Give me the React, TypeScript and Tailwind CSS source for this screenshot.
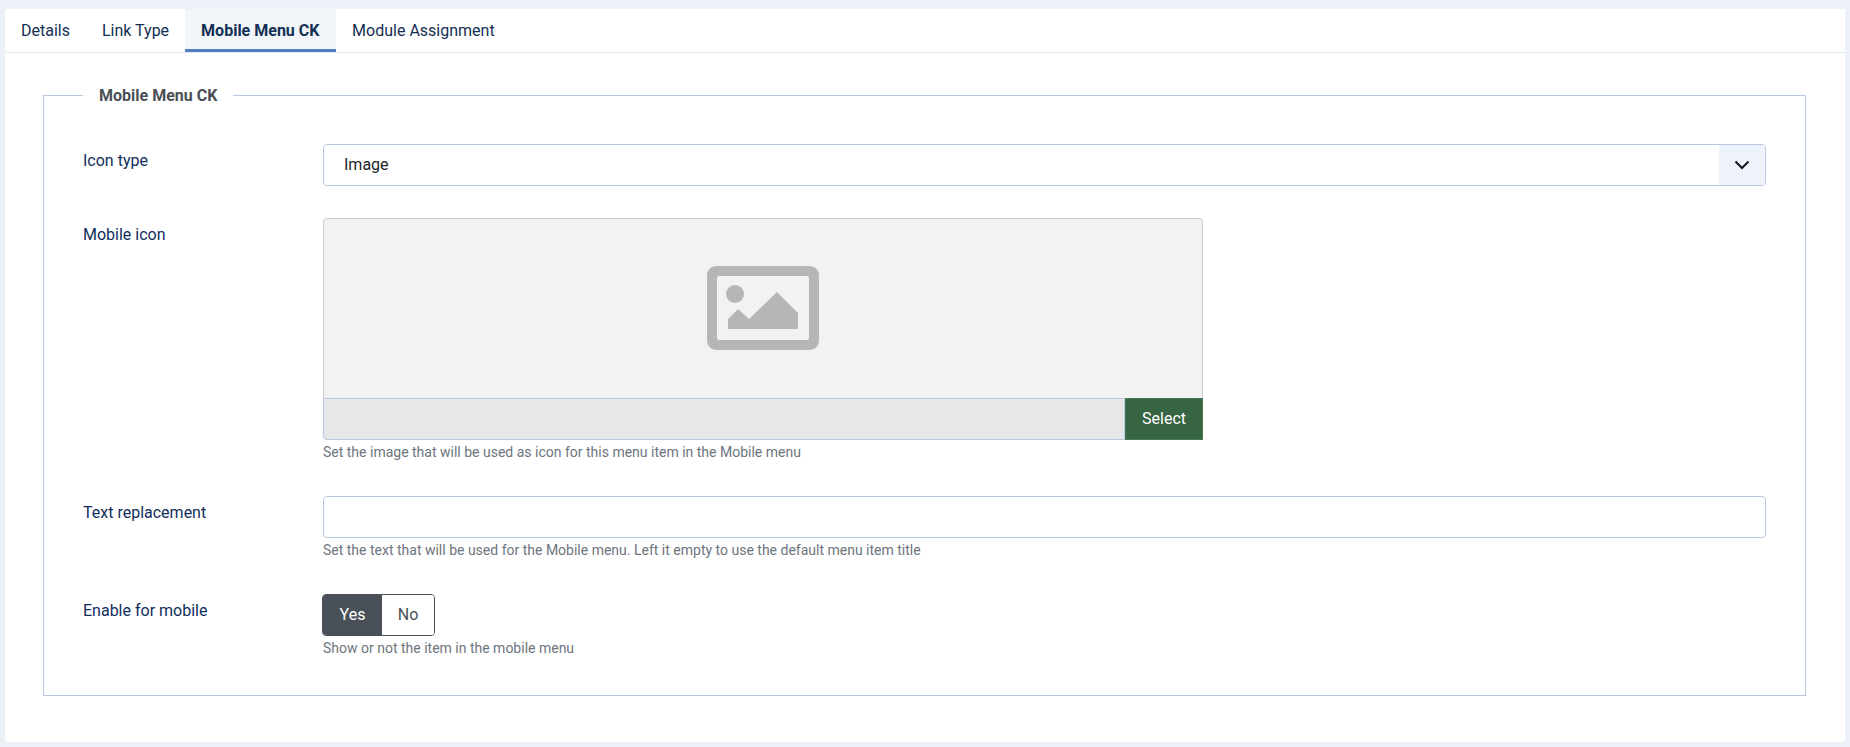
import React from "react";

function Tab({ label, active }: { label: string; active?: boolean }) {
  return active ? (
    <div className="h-[43px] w-[151px] pl-4 flex items-center bg-[#f2f6fa] border-b-[3px] border-[#5280bd] font-bold text-[#132f53] pt-[3px]">{label}</div>
  ) : (
    <div className="h-[43px] px-4 flex items-center text-[#132f53]">{label}</div>
  );
}

function Label({ children }: { children: React.ReactNode }) {
  return <div className="w-[240px] shrink-0 text-[#112e5c] text-base leading-6 pt-[5px]">{children}</div>;
}

function Help({ children }: { children: React.ReactNode }) {
  return <div className="text-sm leading-[21px] text-[#6d757e] mt-[2px]">{children}</div>;
}

export default function App() {
  return (
    <div className="min-h-[747px] bg-[#ecf1f7] px-[5px] py-[9px] font-['Roboto',sans-serif]">
      <div className="bg-white h-[733px] rounded-b-[4px] overflow-hidden">
        <div className="flex h-[44px] border-b border-[#e1e7f2] text-base">
          <Tab label="Details" />
          <Tab label="Link Type" />
          <Tab label="Mobile Menu CK" active />
          <Tab label="Module Assignment" />
        </div>
        <div className="pt-[29px] pl-[38px] pr-[39px]">
          <fieldset className="border border-[#b8c8e0] pl-[39px] pr-[39px] h-[614px]">
            <legend className="px-4 pt-[2px] font-bold text-base leading-6 text-[#4a4f55]">Mobile Menu CK</legend>
            <div className="flex mt-[36px]">
              <Label>Icon type</Label>
              <div className="relative flex-1 h-[42px] border border-[#b8c8e0] rounded-[4px] flex items-center pl-[20px] text-base text-[#212529] overflow-hidden">
                Image
                <div className="absolute right-0 top-0 bottom-0 w-[46px] bg-[#eef3fb] flex items-center justify-center">
                  <svg width="16" height="16" viewBox="0 0 16 16" fill="none" stroke="#16181a" strokeWidth="2">
                    <path d="M1.5 4.5L8 11l6.5-6.5" />
                  </svg>
                </div>
              </div>
            </div>
            <div className="flex mt-[32px]">
              <Label>Mobile icon</Label>
              <div>
                <div className="w-[880px]">
                  <div className="h-[180px] bg-[#f2f2f2] border border-b-0 border-[#cfcfcf] rounded-t-[4px] flex items-center justify-center">
                    <svg width="112" height="84" viewBox="0 0 112 84" className="mt-[-1px]">
                      <path fillRule="evenodd" fill="#b6b6b6" d="M9 0h94a9 9 0 0 1 9 9v66a9 9 0 0 1-9 9H9a9 9 0 0 1-9-9V9a9 9 0 0 1 9-9zM12 10a2 2 0 0 0-2 2v60a2 2 0 0 0 2 2h88a2 2 0 0 0 2-2V12a2 2 0 0 0-2-2z" />
                      <circle cx="28" cy="28" r="9" fill="#b6b6b6" />
                      <path fill="#b6b6b6" d="M21 63V53l10-10 11 10 28-27 21 21v16z" />
                    </svg>
                  </div>
                  <div className="flex h-[42px]">
                    <div className="flex-1 bg-[#e7e7e7] border border-[#b8c8e0] rounded-bl-[4px]" />
                    <div className="w-[78px] bg-[#376543] border border-[#457a52] text-white flex items-center justify-center text-base">Select</div>
                  </div>
                </div>
                <Help>Set the image that will be used as icon for this menu item in the Mobile menu</Help>
              </div>
            </div>
            <div className="flex mt-[33px]">
              <Label>Text replacement</Label>
              <div className="flex-1">
                <div className="h-[42px] border border-[#b8c8e0] rounded-[4px]" />
                <Help>Set the text that will be used for the Mobile menu. Left it empty to use the default menu item title</Help>
              </div>
            </div>
            <div className="flex mt-[33px]">
              <Label>Enable for mobile</Label>
              <div>
                <div className="flex w-[113px] h-[42px] ml-[-1px] border border-[#495057] rounded-[4px] overflow-hidden text-base">
                  <div className="w-[59px] bg-[#495057] text-white flex items-center justify-center">Yes</div>
                  <div className="flex-1 bg-white text-[#495057] flex items-center justify-center">No</div>
                </div>
                <Help>Show or not the item in the mobile menu</Help>
              </div>
            </div>
          </fieldset>
        </div>
      </div>
    </div>
  );
}
